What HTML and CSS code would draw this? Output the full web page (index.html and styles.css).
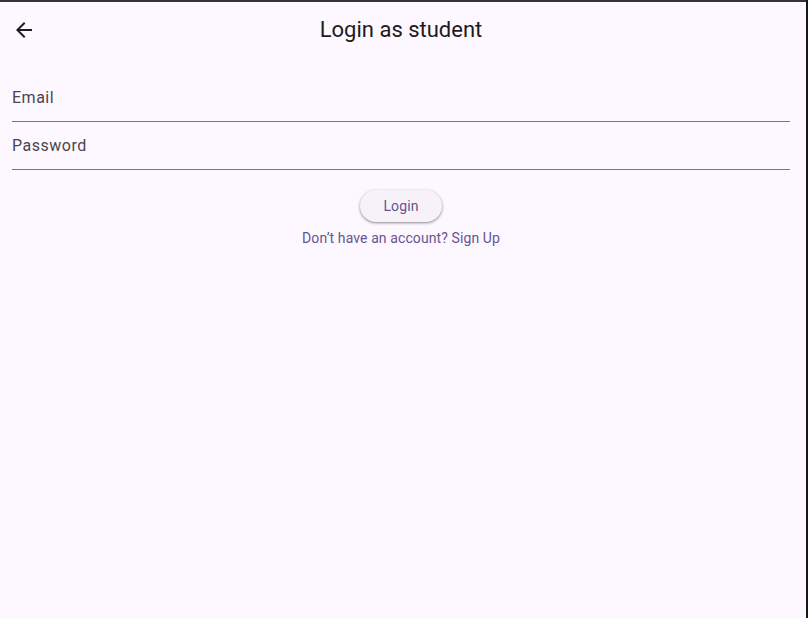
FILE: index.html
```html
<!DOCTYPE html>
<html>
<head>
<meta charset="utf-8">
<link rel="stylesheet" href="styles.css">
</head>
<body>
<div class="app">
  <header class="appbar">
    <button class="back" aria-label="Back">
      <svg width="24" height="24" viewBox="0 0 24 24"><path d="M20 11H7.83l5.59-5.59L12 4l-8 8 8 8 1.41-1.41L7.83 13H20v-2z" fill="#1d1b20"/></svg>
    </button>
    <h1 class="title">Login as student</h1>
  </header>
  <main class="content">
    <div class="field"><span class="label">Email</span></div>
    <div class="field"><span class="label">Password</span></div>
    <div class="actions">
      <button class="login">Login</button>
      <button class="link">Don’t have an account? Sign Up</button>
    </div>
  </main>
</div>
</body>
</html>
```

FILE: styles.css
```css
html, body {
  margin: 0;
  padding: 0;
  height: 100%;
}
body {
  background: #161616;
  font-family: Roboto, "Noto Sans", sans-serif;
  overflow: hidden;
}
.app {
  box-sizing: border-box;
  width: 806px;
  height: 618px;
  background: #fdf7ff;
  border-top: 2px solid #363338;
  display: flex;
  flex-direction: column;
}
.appbar {
  height: 56px;
  display: flex;
  align-items: center;
  justify-content: center;
  position: relative;
  padding: 0 16px 0 12px;
}
.back {
  position: absolute;
  left: 12px;
  top: 16px;
  width: 24px;
  height: 24px;
  padding: 0;
  border: 0;
  background: none;
  display: flex;
}
.title {
  margin: 0;
  font-weight: 400;
  font-size: 22px;
  color: #1d1b20;
  margin-top: -1px;
}
.content {
  padding: 16px 16px 0 12px;
  display: flex;
  flex-direction: column;
}
.field {
  height: 47px;
  border-bottom: 1px solid #79747e;
  display: flex;
  align-items: center;
}
.label {
  font-size: 16px;
  letter-spacing: 0.5px;
  color: #49454f;
  margin-top: -1px;
}
.actions {
  margin-top: 20px;
  display: flex;
  flex-direction: column;
  align-items: center;
}
.login {
  height: 32px;
  padding: 0 23px;
  border: 0;
  border-radius: 16px;
  background: #f7f2fa;
  color: #65558f;
  font-family: Roboto, sans-serif;
  font-size: 14px;
  letter-spacing: 0.1px;
  box-shadow: 0 1px 2px rgba(0,0,0,0.3), 0 1px 3px 1px rgba(0,0,0,0.12);
}
.link {
  height: 32px;
  padding: 0 12px;
  border: 0;
  background: none;
  color: #65558f;
  font-family: Roboto, sans-serif;
  font-size: 14px;
  letter-spacing: 0.1px;
}
```
